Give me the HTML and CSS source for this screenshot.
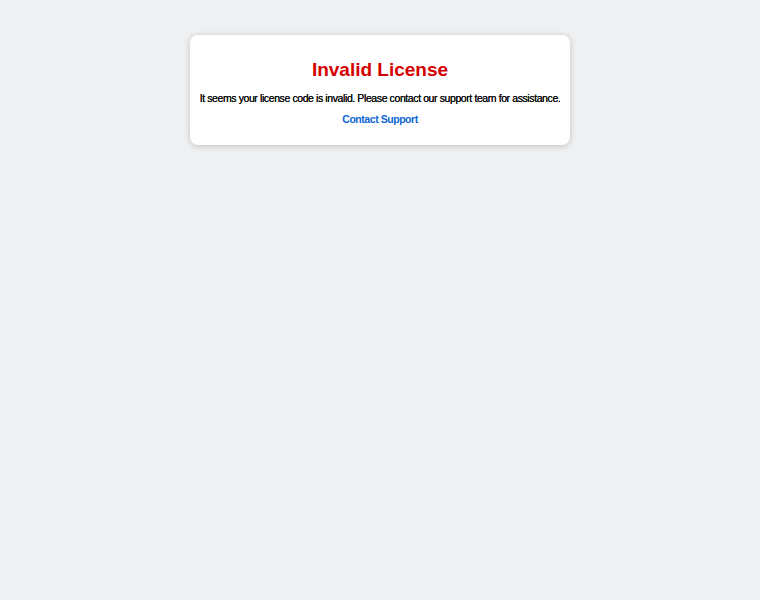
FILE: index.html
```html
<!DOCTYPE html>
<html lang="en">
<head>
  <meta charset="UTF-8" />
  <meta name="viewport" content="width=device-width, initial-scale=1.0"/>
  <title>Invalid License</title>
  <link rel="stylesheet" href="styles.css">
</head>
<body>
  <div class="card">
    <h1>Invalid License</h1>
    <p>It seems your license code is invalid. Please contact our support team for assistance.</p>
    <a href="#" class="support">Contact Support</a>
  </div>
</body>
</html>
```

FILE: styles.css
```css
body {
  font-family: "Liberation Sans", Arial, sans-serif;
  background: #eff0f2;
  margin: 0;
  padding-top: 35px;
  min-height: 100vh;
  box-sizing: border-box;
}

.card {
  background: #fff;
  width: 380px;
  box-sizing: border-box;
  margin: 0 auto;
  padding: 24px 6px 18px;
  border-radius: 8px;
  box-shadow: 0 1px 6px rgba(0,0,0,0.2);
  text-align: center;
}

h1 {
  color: #d40000;
  font-size: 19px;
  line-height: 22px;
  margin: 0 0 11px;
}

p {
  font-size: 10.5px;
  line-height: 13px;
  letter-spacing: -0.4px;
  color: #111;
  margin: 0 0 4px;
  white-space: nowrap;
  text-shadow: 0 0 0.3px #000;
}

.support {
  display: inline-block;
  font-size: 10.5px;
  line-height: 13px;
  letter-spacing: -0.45px;
  font-weight: bold;
  color: #0a66d2;
  text-decoration: none;
}
```
